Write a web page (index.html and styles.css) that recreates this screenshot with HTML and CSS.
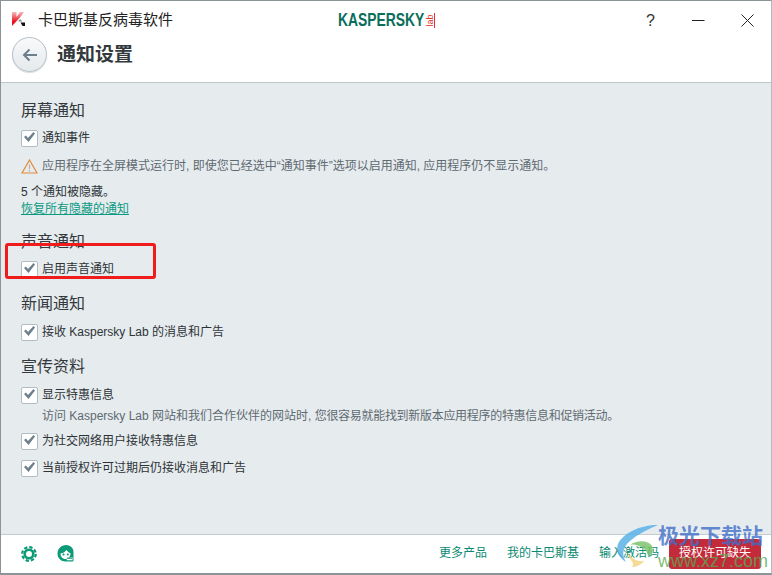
FILE: index.html
```html
<!DOCTYPE html>
<html lang="zh-CN">
<head>
<meta charset="UTF-8">
<meta name="viewport" content="width=device-width, initial-scale=1.0">
<title>通知设置</title>
<link rel="stylesheet" href="styles.css">
</head>
<body>
<div class="window">
    <header class="header">
        <div class="titlebar">
            <div class="app-name">
                <svg class="app-icon" width="14" height="14" viewBox="0 0 14 14">
                    <defs>
                        <linearGradient id="kred" x1="0" y1="0" x2="0" y2="1">
                            <stop offset="0" stop-color="#f9b8bb"/>
                            <stop offset="0.7" stop-color="#e8101e"/>
                        </linearGradient>
                    </defs>
                    <path d="M0 0h4.500v5L8 0h4L7.500 6 0 14z" fill="url(#kred)"/>
                    <path d="M6 9.500 8.200 7l2 2.500H9z" fill="#8a8f92"/>
                    <path d="M8.500 10.500H13V14H10.500z" fill="#111"/>
                </svg>
                <span>卡巴斯基反病毒软件</span>
            </div>
            <div class="logo">KASPERSKY</div>
            <div class="logo-lab">lab</div>
            <div class="win-buttons">
                <span class="win-help">?</span>
                <svg width="13" height="13" viewBox="0 0 13 13"><path d="M0 6.500h12.500" stroke="#222" fill="none"/></svg>
                <svg width="13" height="13" viewBox="0 0 13 13"><path d="M.5.5l12 12M12.500.5l-12 12" stroke="#222" fill="none"/></svg>
            </div>
        </div>
        <div class="page-title">
            <button class="back-btn">
                <svg width="16" height="14" viewBox="0 0 16 14"><path d="M15 7H2M7.500 1.500 2 7l5.500 5.500" stroke="#6d7f8b" stroke-width="2" fill="none"/></svg>
            </button>
            <h1>通知设置</h1>
        </div>
    </header>

    <main class="content">
        <section class="group">
            <h2>屏幕通知</h2>
            <label class="check"><span class="box"></span>通知事件</label>
            <p class="warning">
                <svg width="17" height="15" viewBox="0 0 17 15"><path d="M8.500 1 16 14H1z" fill="none" stroke="#e08a3c" stroke-width="1.200"/><path d="M8.500 5.500v4.500M8.500 11v1.500" stroke="#c9a98e" stroke-width="1.200"/></svg>
                应用程序在全屏模式运行时, 即使您已经选中“通知事件”选项以启用通知, 应用程序仍不显示通知。
            </p>
            <p class="hidden-count">5 个通知被隐藏。</p>
            <a class="link" href="#">恢复所有隐藏的通知</a>
        </section>
        <section class="group">
            <h2>声音通知</h2>
            <label class="check"><span class="box"></span>启用声音通知</label>
        </section>
        <section class="group">
            <h2>新闻通知</h2>
            <label class="check"><span class="box"></span>接收 Kaspersky Lab 的消息和广告</label>
        </section>
        <section class="group">
            <h2>宣传资料</h2>
            <label class="check"><span class="box"></span>显示特惠信息</label>
            <p class="check-note">访问 Kaspersky Lab 网站和我们合作伙伴的网站时, <span class="note-tail">您很容易就能找到新版本应用程序的特惠信息和促销活动。</span></p>
            <label class="check check-spaced"><span class="box"></span>为社交网络用户接收特惠信息</label>
            <label class="check check-spaced"><span class="box"></span>当前授权许可过期后仍接收消息和广告</label>
        </section>
    </main>

    <footer class="footer">
        <div class="footer-icons">
            <svg width="16" height="16" viewBox="0 0 16 16"><circle cx="8" cy="8" r="4.300" fill="none" stroke="#0d9a77" stroke-width="2.600"/><circle cx="8" cy="8" r="6.800" fill="none" stroke="#0d9a77" stroke-width="2.200" stroke-dasharray="3.400 1.950"/></svg>
            <svg width="18" height="17" viewBox="0 0 18 17">
                <path d="M9 0c4.200 0 7.500 3 7.500 7v8c0 1-.5 1.500-1.500 1.500H8.500C4 16.500.5 13 .5 8.500.5 3.500 4.500 0 9 0z" fill="#0d9a77"/>
                <path d="M3.500 8.500C6 8.200 8 7 9.500 5c1 1.500 2.500 2.800 4 3.300 0 3.200-2 5.700-5 5.700-2.700 0-5-2.200-5-5.500z" fill="#fff"/>
                <path d="M9 12.500h6.500v2.700H10z" fill="#fff"/>
                <path d="M10 13.200h4.800" stroke="#0d9a77" stroke-width="1.200"/>
                <circle cx="6.500" cy="9.500" r="1.100" fill="#0d9a77"/>
                <circle cx="10.800" cy="9.500" r="1.100" fill="#0d9a77"/>
            </svg>
        </div>
        <nav class="footer-links">
            <a href="#">更多产品</a>
            <a href="#">我的卡巴斯基</a>
            <a href="#">输入激活码</a>
            <a class="license-btn" href="#">授权许可缺失</a>
        </nav>
    </footer>

    <div class="red-mark"></div>
    <div class="watermark">
        <svg width="42" height="44" viewBox="0 0 42 44">
            <path d="M42 1C24 1 7 9 2 20c-3 8 2 14 8 18C5 30 7 23 14 17 22 10 32 5 42 1z" fill="#5ab2e8" opacity=".85"/>
            <path d="M14 21c7-5 18-5 22 1 2 4 0 8-4 11 0-5-3-8-7-10-4-2-7-3-11-2z" fill="#7cc36c" opacity=".85"/>
            <path d="M12 28c2 6 9 10 16 9-3 4-8 6-12 6 2-2 1-4-1-7-2-2-3-5-3-8z" fill="#f3d27a" opacity=".8"/>
        </svg>
        <div class="wm-text">
            <div class="wm-title">极光下载站</div>
            <div class="wm-url">www.xz7.com</div>
        </div>
    </div>
</div>
</body>
</html>
```

FILE: styles.css
```css
* {
    box-sizing: border-box;
}
html, body {
    margin: 0;
    padding: 0;
}
body {
    font-family: "Liberation Sans", "Noto Sans CJK SC", sans-serif;
    line-height: 17px;
    width: 772px;
    height: 575px;
    overflow: hidden;
    background: #fff;
}
.window {
    position: relative;
    width: 772px;
    height: 575px;
    display: flex;
    flex-direction: column;
    border: 1px solid #8c9498;
    border-right-color: #b4babd;
    border-bottom-width: 2px;
    background: #e6ebee;
}
.header {
    height: 82px;
    background: #fff;
    border-bottom: 1px solid #bcc6cb;
    flex-shrink: 0;
}
.titlebar {
    display: flex;
    align-items: center;
    justify-content: space-between;
    height: 36px;
    position: relative;
}
.app-name {
    display: flex;
    align-items: center;
    margin-left: 11px;
    font-size: 15px;
    color: #222;
}
.app-icon {
    margin-right: 12px;
}
.logo {
    position: absolute;
    left: 337px;
    top: 9px;
    font-size: 18px;
    font-weight: 700;
    line-height: 20px;
    color: #0a6e5c;
    transform: scaleX(0.77);
    transform-origin: left center;
}
.logo-lab {
    position: absolute;
    left: 422px;
    top: 15px;
    width: 15px;
    font-size: 9px;
    line-height: 8px;
    text-align: center;
    color: #e2352f;
    border-bottom: 1px solid #e2352f;
    transform: rotate(-90deg);
}
.win-buttons {
    display: flex;
    align-items: center;
    gap: 36px;
    margin-right: 17px;
    margin-top: 2px;
}
.win-help {
    font-size: 16px;
    color: #333;
    margin-right: 1px;
}
.page-title {
    display: flex;
    align-items: center;
    padding-left: 11px;
    gap: 10px;
}
.back-btn {
    width: 35px;
    height: 35px;
    border-radius: 50%;
    border: 1px solid #b5bfc4;
    background: linear-gradient(#f9fafb, #e4e9ec);
    box-shadow: 0 1px 1px rgba(0, 0, 0, 0.15);
    padding: 0;
    display: flex;
    align-items: center;
    justify-content: center;
}
h1 {
    margin: 0;
    font-size: 19px;
    font-weight: 700;
    color: #33393d;
    line-height: 24px;
}
.content {
    flex: 1;
    padding: 16px 20px 0;
}
.group {
    margin-bottom: 12px;
}
h2 {
    margin: 0 0 5px;
    font-size: 16px;
    font-weight: 400;
    line-height: 24px;
    color: #33393d;
}
.group:nth-child(1) h2,
.group:nth-child(2) h2 {
    margin-bottom: 4px;
}
.check {
    display: flex;
    align-items: center;
    height: 22px;
    font-size: 12px;
    color: #2d3336;
}
.check-spaced {
    margin-top: 5px;
}
.box {
    position: relative;
    width: 17px;
    height: 17px;
    margin-right: 4px;
    background: #fff;
    border: 1px solid #b3bcc1;
    border-radius: 2px;
    flex-shrink: 0;
}
.box::after {
    content: "";
    position: absolute;
    inset: 0;
    background: #6d7f8b;
    clip-path: polygon(2px 6.500px, 4px 5px, 6px 7.500px, 11.500px 1.500px, 13px 3px, 6.500px 11.500px);
}
.warning {
    display: flex;
    align-items: center;
    gap: 4px;
    margin: 7px 0 0;
    height: 20px;
    font-size: 12px;
    color: #5e6a71;
    white-space: nowrap;
}
.hidden-count {
    margin: 8px 0 0;
    font-size: 12px;
    line-height: 17px;
    color: #2d3336;
}
.link {
    display: block;
    font-size: 12px;
    line-height: 17px;
    color: #0a9a82;
}
.check-note {
    margin: 1px 0 0 21px;
    font-size: 12px;
    line-height: 18px;
    color: #5e6a71;
    white-space: nowrap;
}
.note-tail {
    letter-spacing: -0.3px;
}
.footer {
    height: 39px;
    flex-shrink: 0;
    background: #fff;
    border-top: 1px solid #c3ccd0;
    display: flex;
    align-items: center;
    justify-content: space-between;
    padding: 0 10px 1px 20px;
}
.footer-icons {
    display: flex;
    align-items: center;
    gap: 20px;
}
.footer-links {
    display: flex;
    align-items: center;
    font-size: 12px;
    gap: 20px;
}
.footer-links a {
    color: #0a8a72;
    text-decoration: none;
}
.footer-links .license-btn {
    background: #c32b3b;
    color: #fff;
    width: 92px;
    height: 30px;
    line-height: 29px;
    text-align: center;
    border-radius: 3px;
    margin-left: -10px;
}
.red-mark {
    position: absolute;
    left: 4px;
    top: 242px;
    width: 151px;
    height: 36px;
    border: 3px solid #f01c1c;
    border-radius: 3px;
}
.watermark {
    position: absolute;
    left: 615px;
    top: 523px;
    display: flex;
    pointer-events: none;
}
.wm-title {
    font-size: 21px;
    font-weight: 700;
    line-height: 24px;
    color: rgba(62, 110, 200, 0.8);
    white-space: nowrap;
}
.wm-url {
    font-size: 18px;
    line-height: 22px;
    margin-top: 2px;
    color: rgba(90, 170, 80, 0.8);
    white-space: nowrap;
}
```
